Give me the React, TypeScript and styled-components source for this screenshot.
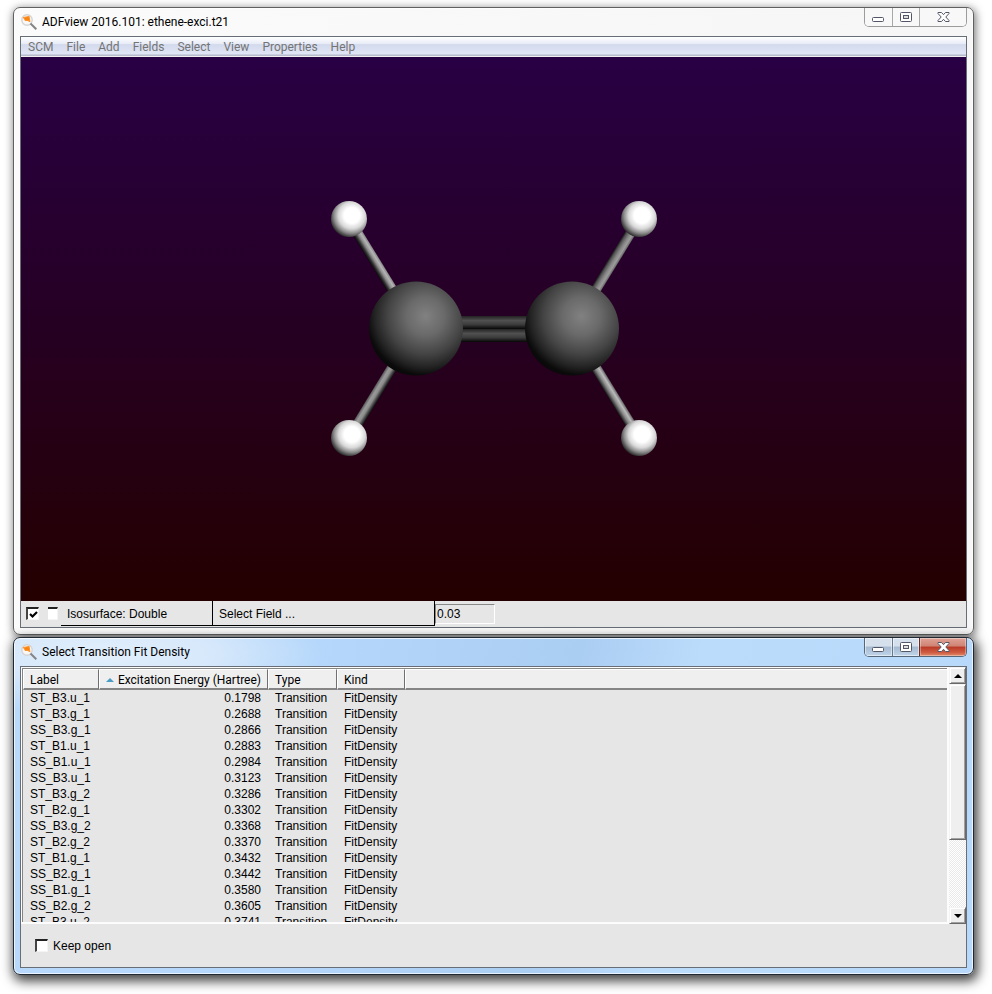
import React, { useState } from "react";
import styled, { createGlobalStyle, css } from "styled-components";

const sans = '"Liberation Sans", Arial, sans-serif';
const ui = 'Roboto, "Segoe UI", sans-serif';

const GlobalStyle = createGlobalStyle`
  *, *::before, *::after { box-sizing: border-box; }
  body { margin: 0; background: #fff; color: #000; font: 12px/16px ${sans}; }
  button, input { font: inherit; color: inherit; }
`;

const Desktop = styled.main`
  display: flex;
  flex-direction: column;
  gap: 2px;
  min-height: 100vh;
  padding: 7px 18px 19px 13px;
`;

const Frame = styled.section<{ $active?: boolean }>`
  display: flex;
  flex-direction: column;
  border: 1px solid ${(p) => (p.$active ? "#1f2833" : "#606060")};
  border-radius: 7px;
  padding: 0 6px 6px;
  background: ${(p) =>
    p.$active
      ? "radial-gradient(ellipse 220px 60px at 90px 16px, #e2effc 0, #d6e8fb 50%, transparent 100%), linear-gradient(100deg, #b9d9fb 0, #b5d7fb 300px, #aacdf2 560px, #bcdcfb 680px, #b8d8fb 100%)"
      : "linear-gradient(90deg, #fbfbfb, #f6f6f6)"};
  box-shadow: inset 0 0 0 1px rgba(255, 255, 255, 0.7),
    ${(p) => (p.$active ? "2px 4px 12px 2px rgba(0,0,0,0.75)" : "1px 2px 9px 1px rgba(0,0,0,0.5)")};
`;

const TitleBar = styled.header`
  display: flex;
  align-items: flex-start;
  height: 28px;
`;

const Title = styled.h1`
  display: flex;
  align-items: center;
  gap: 5px;
  flex: 1;
  height: 28px;
  margin: 0;
  padding-left: 1px;
  font: 400 12px/16px ${ui};
`;

const CaptionGroup = styled.div<{ $active?: boolean }>`
  display: flex;
  height: 19px;
  border: 1px solid ${(p) => (p.$active ? "#566779" : "#9c9c9c")};
  border-top: 0;
  border-radius: 0 0 5px 5px;
  overflow: hidden;
`;

const tones = {
  plain: css`
    background: #f8f8f8;
    &:not(:first-child) { border-left: 1px solid #a8a8a8; }
  `,
  blue: css`
    background: linear-gradient(#d5e0ec 0 45%, #a5b9d0 50%, #c0d4ea);
    box-shadow: inset 0 0 0 1px rgba(255, 255, 255, 0.5);
    &:not(:first-child) { border-left: 1px solid #66788c; }
  `,
  red: css`
    background: linear-gradient(#dfa396 0, #cf8374 45%, #b93a26 50%, #cf5b41 80%, #e08b6c);
    box-shadow: inset 0 0 0 1px rgba(255, 255, 255, 0.35);
    &:not(:first-child) { border-left: 1px solid #66302a; }
  `,
};

const CaptionButton = styled.button<{ $tone: keyof typeof tones; $wide?: boolean }>`
  display: grid;
  place-items: center;
  width: ${(p) => (p.$wide ? 47 : 27)}px;
  height: 18px;
  padding: 0;
  border: 0;
  ${(p) => tones[p.$tone]}
`;

const Client = styled.div`
  display: flex;
  flex-direction: column;
  border: 1px solid #686e76;
  background: #e6e6e6;
`;

const MenuBar = styled.nav`
  display: flex;
  gap: 13px;
  height: 20px;
  padding: 0 7px;
  border-bottom: 1px solid #f0f0f0;
  background: linear-gradient(#fff 0, #e8ecf6 35%, #d3daed 40%, #e0e6f5 90%, #b6bccc 94%);
`;

const MenuItem = styled.button`
  padding: 0;
  border: 0;
  background: none;
  color: #747474;
  font: 12px/18px ${ui};
`;

const Viewport = styled.div`
  height: 544px;
  background: linear-gradient(#280044, #240000);
  svg { display: block; width: 100%; height: 100%; }
`;

const FieldBar = styled.div`
  display: flex;
  align-items: flex-start;
  height: 26px;
`;

const Toggles = styled.div`
  display: flex;
  gap: 9px;
  align-items: center;
  width: 40px;
  height: 25px;
  padding-left: 5px;
`;

const Check = styled.input<{ $flat?: boolean }>`
  appearance: none;
  flex: none;
  width: ${(p) => (p.$flat ? 10 : 13)}px;
  height: 13px;
  margin: 0;
  border: 1px solid #f4f4f4;
  border-top: 2px solid #222;
  border-left: ${(p) => (p.$flat ? "0" : "2px solid #444")};
  background: #fff center / 9px 9px no-repeat;
  &:checked {
    background-image: url("data:image/svg+xml,%3Csvg xmlns='http://www.w3.org/2000/svg' viewBox='0 0 9 9'%3E%3Cpath d='M1 4l2.500 2.500L8 2' fill='none' stroke='%23000' stroke-width='2.200'/%3E%3C/svg%3E");
  }
`;

const FieldButton = styled.button<{ $w: number }>`
  width: ${(p) => p.$w}px;
  height: 25px;
  padding: 1px 6px 0;
  border: solid #000;
  border-width: 0 1px 1px 0;
  background: #e6e6e6;
  text-align: left;
`;

const ValueInput = styled.input`
  width: 60px;
  height: 20px;
  margin-top: 3px;
  padding: 0 1px;
  border: 1px solid;
  border-color: #888 #fff #fff #888;
  background: #e6e6e6;
  border-radius: 0;
`;

const ListRow = styled.div`
  display: flex;
  height: 257px;
`;

const ListBox = styled.div`
  flex: 1;
  overflow: hidden;
  border: solid #fcfcfc;
  border-width: 1px 2px 2px 1px;
`;

const ListInner = styled.div`
  border: solid #858585;
  border-width: 1px 0 0 1px;
`;

const Table = styled.table`
  width: 100%;
  table-layout: fixed;
  border-collapse: separate;
  border-spacing: 0;
`;

const Th = styled.th<{ $w?: number; $right?: boolean }>`
  width: ${(p) => (p.$w ? p.$w + "px" : "auto")};
  height: 21px;
  padding: 1px 6px 0;
  border: solid;
  border-width: 1px 1px 2px;
  border-color: #fff #707070 #858585 #fff;
  background: #efefef;
  font: 400 12px/16px ${ui};
  text-align: ${(p) => (p.$right ? "right" : "left")};
  white-space: nowrap;
  &:last-child { border-right: 0; }
`;

const SortLabel = styled.span`
  display: flex;
  align-items: center;
  justify-content: space-between;
`;

const Td = styled.td<{ $right?: boolean }>`
  height: 16px;
  padding: 0 7px;
  text-align: ${(p) => (p.$right ? "right" : "left")};
  white-space: nowrap;
`;

const ScrollBar = styled.div`
  display: flex;
  flex-direction: column;
  width: 17px;
  background: repeating-conic-gradient(#e9e9e9 0 25%, #fff 0 50%) 0 0 / 2px 2px;
`;

const raised = css`
  border: 1px solid;
  border-color: #f4f4f4 #696969 #696969 #f4f4f4;
  background: #efefef;
  box-shadow: inset 1px 1px 0 #fff, inset -1px -1px 0 #a0a0a0;
`;

const ScrollButton = styled.button`
  ${raised}
  display: grid;
  place-items: center;
  height: 17px;
  padding: 0;
`;

const ScrollThumb = styled.div`
  ${raised}
  height: 156px;
`;

const Spacer = styled.div`
  flex: 1;
`;

const Footer = styled.div`
  display: flex;
  align-items: center;
  height: 43px;
  padding-left: 14px;
`;

const CheckLabel = styled.label`
  display: flex;
  align-items: center;
  gap: 5px;
`;

const AppIcon = () => (
  <svg width="16" height="16" viewBox="0 0 16 16" aria-hidden="true">
    <circle cx="6" cy="6" r="5.200" fill="#faf8f6" stroke="#d6d4d2" strokeWidth="1.400" />
    <path d="M2.500 3.500L8 2.500L8.800 7.500L6.500 6.200L4.500 6.500Z" fill="#fb8209" stroke="#fb9330" strokeWidth="1.200" strokeLinejoin="round" />
    <path d="M9.500 9.500L15.300 15.300" stroke="#858585" strokeWidth="2" />
  </svg>
);

const MinIcon = () => (
  <svg width="13" height="14" viewBox="0 0 13 14" aria-hidden="true">
    <rect x="0.500" y="7.500" width="11" height="4" rx="1" fill="#fff" stroke="#535666" />
  </svg>
);

const MaxIcon = () => (
  <svg width="12" height="14" viewBox="0 0 12 14" aria-hidden="true">
    <rect x="0.500" y="2.500" width="11" height="9" rx="1" fill="#fff" stroke="#535666" />
    <rect x="3.500" y="5.500" width="5" height="3" fill="#ddd" stroke="#535666" />
  </svg>
);

const CloseIcon = () => (
  <svg width="13" height="14" viewBox="0 0 13 14" aria-hidden="true">
    <path
      d="M1 2.500H4.500L6.500 4.700L8.500 2.500H12V3.500L8.800 7L12 10.500V11.500H8.500L6.500 9.300L4.500 11.500H1V10.500L4.200 7L1 3.500Z"
      fill="#fff"
      stroke="#535666"
    />
  </svg>
);

const Arrow = ({ up, color = "#000" }: { up?: boolean; color?: string }) => (
  <svg width="8" height="4" viewBox="0 0 8 4" aria-hidden="true">
    <path d={up ? "M0 4L4 0L8 4Z" : "M0 0L4 4L8 0Z"} fill={color} />
  </svg>
);

const Captions = ({ active }: { active?: boolean }) => {
  const tone = active ? "blue" : "plain";
  return (
    <CaptionGroup $active={active}>
      <CaptionButton $tone={tone} aria-label="Minimize"><MinIcon /></CaptionButton>
      <CaptionButton $tone={tone} aria-label="Maximize"><MaxIcon /></CaptionButton>
      <CaptionButton $tone={active ? "red" : "plain"} $wide aria-label="Close"><CloseIcon /></CaptionButton>
    </CaptionGroup>
  );
};

const hydrogens = [
  { x: 349, y: 219 },
  { x: 639, y: 219 },
  { x: 349, y: 438 },
  { x: 639, y: 438 },
];

const bonds = [
  { x: 349, y: 219, angle: 58.5, grad: "rodLight" },
  { x: 572, y: 328.5, angle: -58.5, grad: "rodDown" },
  { x: 349, y: 438, angle: -58.5, grad: "rodMid" },
  { x: 572, y: 328.5, angle: 58.5, grad: "rodUp" },
];

const stops = (list: [number, string][]) =>
  list.map(([o, c]) => <stop key={o} offset={o} stopColor={c} />);

const Molecule = () => (
  <svg viewBox="21 57 945 544" role="img" aria-label="Ethene molecule">
    <defs>
      <radialGradient id="carbon" cx="0.6" cy="0.37" r="0.67">
        {stops([[0, "#818181"], [0.3, "#6a6a6a"], [0.6, "#444"], [0.8, "#242424"], [0.93, "#0b0b0b"], [1, "#080808"]])}
      </radialGradient>
      <radialGradient id="hydrogen" cx="0.58" cy="0.4" r="0.62">
        {stops([[0, "#fff"], [0.35, "#fff"], [0.6, "#d8d8d8"], [0.8, "#8c8c8c"], [1, "#2c2c2c"]])}
      </radialGradient>
      <linearGradient id="rodLight" x2="0" y2="1">
        {stops([[0, "#858585"], [0.25, "#b4b4b4"], [0.5, "#8e8e8e"], [0.8, "#303030"], [1, "#0a0a0a"]])}
      </linearGradient>
      <linearGradient id="rodDown" x2="0" y2="1">
        {stops([[0, "#1c1c1c"], [0.2, "#555"], [0.5, "#868686"], [0.75, "#9c9c9c"], [1, "#666"]])}
      </linearGradient>
      <linearGradient id="rodMid" x2="0" y2="1">
        {stops([[0, "#555"], [0.3, "#999"], [0.55, "#8c8c8c"], [0.8, "#444"], [1, "#101010"]])}
      </linearGradient>
      <linearGradient id="rodUp" x2="0" y2="1">
        {stops([[0, "#666"], [0.3, "#bbb"], [0.6, "#8a8a8a"], [0.85, "#444"], [1, "#151515"]])}
      </linearGradient>
      <linearGradient id="double" x2="0" y2="1">
        {stops([[0, "#222"], [0.35, "#505050"], [0.65, "#3c3c3c"], [1, "#060606"]])}
      </linearGradient>
    </defs>
    {bonds.map((b) => (
      <rect
        key={b.grad}
        y="-5"
        width="125"
        height="10"
        fill={`url(#${b.grad})`}
        transform={`translate(${b.x} ${b.y}) rotate(${b.angle})`}
      />
    ))}
    <rect x="455" y="316" width="80" height="13" fill="url(#double)" />
    <rect x="455" y="329" width="80" height="13" fill="url(#double)" />
    <circle cx="416" cy="328.500" r="47" fill="url(#carbon)" />
    <circle cx="572" cy="328.500" r="47" fill="url(#carbon)" />
    {hydrogens.map((h) => (
      <circle key={`${h.x}-${h.y}`} cx={h.x} cy={h.y} r="18" fill="url(#hydrogen)" />
    ))}
  </svg>
);

const menus = ["SCM", "File", "Add", "Fields", "Select", "View", "Properties", "Help"];

const transitions: [string, string][] = [
  ["ST_B3.u_1", "0.1798"],
  ["ST_B3.g_1", "0.2688"],
  ["SS_B3.g_1", "0.2866"],
  ["ST_B1.u_1", "0.2883"],
  ["SS_B1.u_1", "0.2984"],
  ["SS_B3.u_1", "0.3123"],
  ["ST_B3.g_2", "0.3286"],
  ["ST_B2.g_1", "0.3302"],
  ["SS_B3.g_2", "0.3368"],
  ["ST_B2.g_2", "0.3370"],
  ["ST_B1.g_1", "0.3432"],
  ["SS_B2.g_1", "0.3442"],
  ["SS_B1.g_1", "0.3580"],
  ["SS_B2.g_2", "0.3605"],
  ["ST_B3.u_2", "0.3741"],
];

export default function App() {
  const [visible, setVisible] = useState(true);
  const [extra, setExtra] = useState(false);
  const [keepOpen, setKeepOpen] = useState(false);
  const [iso, setIso] = useState("0.03");

  return (
    <>
      <GlobalStyle />
      <Desktop>
        <Frame>
          <TitleBar>
            <Title><AppIcon />ADFview 2016.101: ethene-exci.t21</Title>
            <Captions />
          </TitleBar>
          <Client>
            <MenuBar>
              {menus.map((m) => <MenuItem key={m}>{m}</MenuItem>)}
            </MenuBar>
            <Viewport><Molecule /></Viewport>
            <FieldBar>
              <Toggles>
                <Check type="checkbox" aria-label="Show isosurface" checked={visible} onChange={(e) => setVisible(e.target.checked)} />
                <Check $flat type="checkbox" aria-label="Isosurface option" checked={extra} onChange={(e) => setExtra(e.target.checked)} />
              </Toggles>
              <FieldButton $w={152}>Isosurface: Double</FieldButton>
              <FieldButton $w={222}>Select Field ...</FieldButton>
              <ValueInput aria-label="Isovalue" value={iso} onChange={(e) => setIso(e.target.value)} />
            </FieldBar>
          </Client>
        </Frame>

        <Frame $active>
          <TitleBar>
            <Title><AppIcon />Select Transition Fit Density</Title>
            <Captions active />
          </TitleBar>
          <Client>
            <ListRow>
              <ListBox>
                <ListInner>
                  <Table>
                    <thead>
                      <tr>
                        <Th $w={76}>Label</Th>
                        <Th $w={169} $right>
                          <SortLabel>
                            <Arrow up color="#4a9cc4" />
                            Excitation Energy (Hartree)
                          </SortLabel>
                        </Th>
                        <Th $w={69}>Type</Th>
                        <Th $w={68}>Kind</Th>
                        <Th aria-hidden="true" />
                      </tr>
                    </thead>
                    <tbody>
                      {transitions.map(([label, energy]) => (
                        <tr key={label}>
                          <Td>{label}</Td>
                          <Td $right>{energy}</Td>
                          <Td>Transition</Td>
                          <Td>FitDensity</Td>
                          <Td />
                        </tr>
                      ))}
                    </tbody>
                  </Table>
                </ListInner>
              </ListBox>
              <ScrollBar>
                <ScrollButton aria-label="Scroll up"><Arrow up /></ScrollButton>
                <ScrollThumb />
                <Spacer />
                <ScrollButton aria-label="Scroll down"><Arrow /></ScrollButton>
              </ScrollBar>
            </ListRow>
            <Footer>
              <CheckLabel>
                <Check type="checkbox" checked={keepOpen} onChange={(e) => setKeepOpen(e.target.checked)} />
                Keep open
              </CheckLabel>
            </Footer>
          </Client>
        </Frame>
      </Desktop>
    </>
  );
}
